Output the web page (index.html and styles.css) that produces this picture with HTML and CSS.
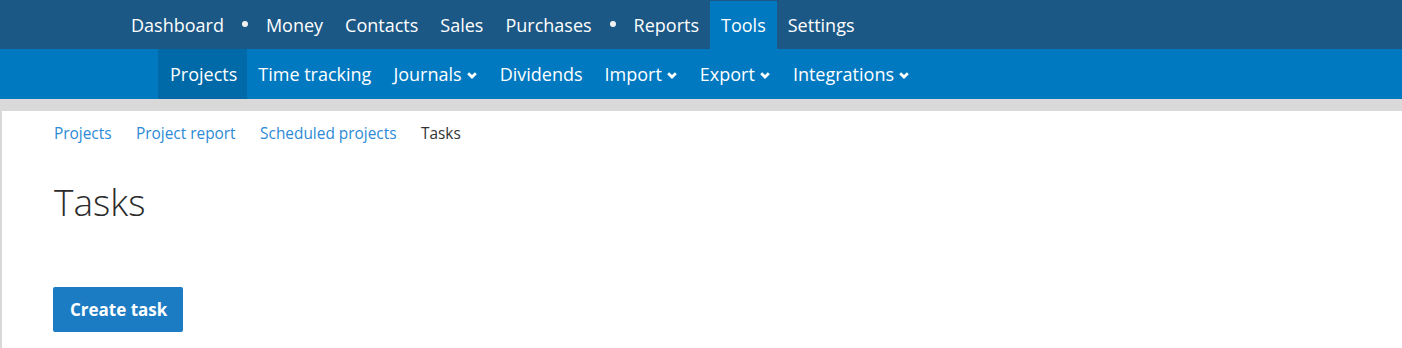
FILE: index.html
```html
<!DOCTYPE html>
<html lang="en">

<head>
    <meta charset="UTF-8">
    <meta name="viewport" content="width=device-width, initial-scale=1.0">
    <title>Tasks</title>
    <link rel="stylesheet" href="styles.css">
</head>

<body>

    <div class="topnav">
        <a class="topnav-item" href="#">Dashboard</a>
        <span class="topnav-dot"></span>
        <a class="topnav-item" href="#">Money</a>
        <a class="topnav-item" href="#">Contacts</a>
        <a class="topnav-item" href="#">Sales</a>
        <a class="topnav-item" href="#">Purchases</a>
        <span class="topnav-dot"></span>
        <a class="topnav-item" href="#">Reports</a>
        <a class="topnav-item active" href="#">Tools</a>
        <a class="topnav-item" href="#">Settings</a>
    </div>

    <div class="subnav">
        <a class="subnav-item active" href="#">Projects</a>
        <a class="subnav-item" href="#">Time tracking</a>
        <a class="subnav-item" href="#">Journals <svg class="chevron" viewBox="0 0 10 7"><path d="M1.2 1.2 L5 5 L8.8 1.2" /></svg></a>
        <a class="subnav-item" href="#">Dividends</a>
        <a class="subnav-item" href="#">Import <svg class="chevron" viewBox="0 0 10 7"><path d="M1.2 1.2 L5 5 L8.8 1.2" /></svg></a>
        <a class="subnav-item" href="#">Export <svg class="chevron" viewBox="0 0 10 7"><path d="M1.2 1.2 L5 5 L8.8 1.2" /></svg></a>
        <a class="subnav-item" href="#">Integrations <svg class="chevron" viewBox="0 0 10 7"><path d="M1.2 1.2 L5 5 L8.8 1.2" /></svg></a>
    </div>

    <div class="page">
        <div class="breadcrumbs">
            <a href="#">Projects</a>
            <a href="#">Project report</a>
            <a href="#">Scheduled projects</a>
            <span>Tasks</span>
        </div>

        <h1>Tasks</h1>

        <button class="btn">Create task</button>
    </div>

</body>

</html>
```

FILE: styles.css
```css
* {
    margin: 0;
    padding: 0;
    box-sizing: border-box;
}

body {
    font-family: "Open Sans", "Liberation Sans", sans-serif;
    background-color: #d9d9d9;
    color: #333;
}

a {
    text-decoration: none;
}

.topnav {
    display: flex;
    align-items: stretch;
    height: 49px;
    padding-left: 120px;
    background-color: #1c5886;
}

.topnav-item {
    display: flex;
    align-items: center;
    padding: 0 11px 1px;
    margin-top: 1px;
    font-size: 18px;
    color: #fff;
}

.topnav-item.active {
    background-color: #0079c1;
}

.topnav-dot {
    width: 20px;
    display: flex;
    align-items: center;
    justify-content: center;
}

.topnav-dot::after {
    content: "";
    width: 6px;
    height: 6px;
    border-radius: 50%;
    background-color: #f2f2f2;
    margin-top: -2px;
}

.subnav {
    display: flex;
    height: 50px;
    padding-left: 158px;
    background-color: #0079c1;
}

.subnav-item {
    display: flex;
    align-items: center;
    gap: 5px;
    padding: 0 11px;
    font-size: 18px;
    color: #fff;
}

.subnav-item.active {
    background-color: #0069a7;
    padding: 0 10px 0 12px;
}

.chevron {
    width: 10px;
    height: 7px;
    margin-top: 3px;
    margin-right: 1px;
}

.chevron path {
    fill: none;
    stroke: #fff;
    stroke-width: 2.8;
}

.page {
    margin-top: 12px;
    margin-left: 2px;
    min-height: 237px;
    background-color: #fff;
    padding: 12px 0 0 52px;
}

.breadcrumbs {
    display: flex;
    gap: 24.5px;
    font-size: 15.4px;
    line-height: 22px;
}

.breadcrumbs a {
    color: #2d8ad6;
}

.breadcrumbs span {
    color: #333;
}

h1 {
    font-size: 37px;
    font-weight: 300;
    line-height: 48px;
    margin-top: 33px;
    color: #2b2b2b;
}

.btn {
    margin-top: 61px;
    margin-left: -1px;
    height: 45px;
    padding: 0 16px 0 17px;
    border: none;
    border-radius: 2px;
    background-color: #1c7cc3;
    color: #fff;
    font-family: "Open Sans", "Liberation Sans", sans-serif;
    font-size: 17px;
    font-weight: 700;
}
```
